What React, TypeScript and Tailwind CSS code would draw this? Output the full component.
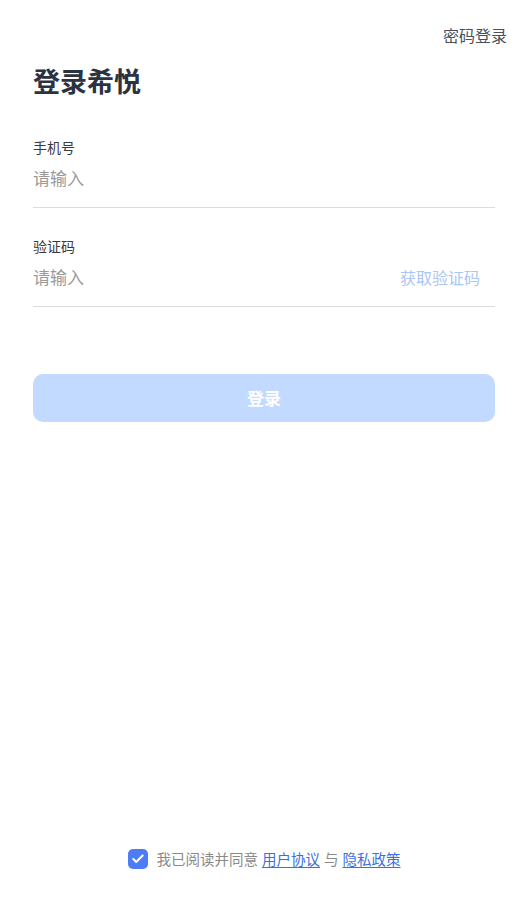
import { Check } from "lucide-react";

const font = { fontFamily: '"Noto Sans CJK SC", "Noto Sans", sans-serif' };

const App = () => {
  return (
    <div
      className="min-h-[922px] bg-white flex flex-col"
      style={font}
    >
      {/* Header */}
      <div className="flex justify-end pt-[23px] pr-[21px]">
        <span className="text-[16px] leading-6 text-[#4a4f58]">密码登录</span>
      </div>

      <div className="px-[33px]">
        <h1 className="mt-[16px] text-[27px] leading-9 font-bold text-[#2c3340]">登录希悦</h1>

        {/* Phone */}
        <div className="mt-[38px] border-b border-[#dcdcdc] pb-[17px]">
          <div className="text-[14px] leading-5 text-[#3a3a3a]">手机号</div>
          <input
            className="mt-[9px] w-full text-[17px] leading-6 text-[#333] placeholder:text-[#9a9a9a] outline-none"
            placeholder="请输入"
          />
        </div>

        {/* Code */}
        <div className="mt-[28px] border-b border-[#dcdcdc] pb-[17px]">
          <div className="text-[14px] leading-5 text-[#3a3a3a]">验证码</div>
          <div className="mt-[9px] flex items-center">
            <input
              className="flex-1 text-[17px] leading-6 text-[#333] placeholder:text-[#9a9a9a] outline-none"
              placeholder="请输入"
            />
            <span className="mr-[15px] text-[16px] leading-6 text-[#a9c6f6]">获取验证码</span>
          </div>
        </div>

        <button className="mt-[67px] w-full h-[48px] rounded-[10px] bg-[#c2daff] text-white text-[17px] font-bold">
          登录
        </button>
      </div>

      {/* Agreement */}
      <div className="mt-auto pb-[52px] flex items-center justify-center">
        <span className="w-[20px] h-[20px] rounded-[5px] bg-[#4d7cf5] flex items-center justify-center">
          <Check size={14} strokeWidth={3.5} className="text-white" />
        </span>
        <span className="ml-[9px] text-[14.5px] text-[#8a8a8a]">我已阅读并同意</span>
        <a className="ml-[4px] text-[14.5px] text-[#3a6fe0] underline underline-offset-2">用户协议</a>
        <span className="mx-[4px] text-[14.5px] text-[#8a8a8a]">与</span>
        <a className="text-[14.5px] text-[#3a6fe0] underline underline-offset-2">隐私政策</a>
      </div>
    </div>
  );
};

export default App;
